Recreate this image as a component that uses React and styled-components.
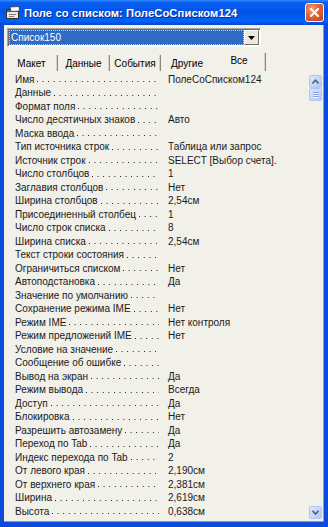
import React from 'react'
import styled, { createGlobalStyle } from 'styled-components'

const GlobalStyle = createGlobalStyle`
  html, body {
    margin: 0;
    padding: 0;
    background: #0A4BDB;
  }
  body {
    font-family: "Liberation Sans", Arial, sans-serif;
  }
`

const Window = styled.div`
  width: 328px;
  height: 527px;
  display: flex;
  flex-direction: column;
  background: #0A4BDB;
  box-sizing: border-box;
  overflow: hidden;
`

const TitleBar = styled.div`
  height: 25px;
  flex: none;
  display: flex;
  align-items: center;
  padding: 0 4px 0 6px;
  background: linear-gradient(to bottom, #2E8BFF 0%, #0B5FF0 10%, #0054E8 45%, #0062F8 85%, #0050E0 94%, #0A44D0 100%);
`

const TitleIcon = styled.svg`
  width: 14px;
  height: 13px;
  flex: none;
  margin-top: -1px;
`

const TitleText = styled.div`
  flex: 1;
  margin-left: 4px;
  color: #fff;
  font-weight: bold;
  font-size: 11.2px;
  letter-spacing: 0.1px;
  text-shadow: 1px 1px 0 #0A2B8C;
  white-space: nowrap;
`

const CloseButton = styled.div`
  width: 19px;
  height: 19px;
  box-sizing: border-box;
  border: 1px solid #fff;
  border-radius: 3px;
  background: radial-gradient(circle at 35% 30%, #F2A07E 0%, #E06238 45%, #C7401C 100%);
  display: flex;
  align-items: center;
  justify-content: center;
  margin-top: -1px;
`

const Client = styled.div`
  flex: 1;
  margin: 0 4px 5px 4px;
  background: #F1F0E9;
  border-right: 1px solid #9D9A8C;
  border-bottom: 1px solid #9D9A8C;
  display: flex;
  flex-direction: column;
  padding-top: 3px;
  min-height: 0;
`

const ComboBox = styled.div`
  width: 254px;
  height: 19px;
  margin-left: 3px;
  box-sizing: border-box;
  border-top: 1px solid #ACA899;
  border-left: 1px solid #ACA899;
  border-right: 1px solid #fff;
  border-bottom: 1px solid #fff;
  box-shadow: inset 1px 1px 0 #716F64;
  background: #fff;
  display: flex;
  padding: 1px;
`

const ComboText = styled.div`
  flex: 1;
  background: #316AC5;
  color: #fff;
  font-size: 10px;
  line-height: 15px;
  padding-left: 2px;
  outline: 1px dotted #E8C86A;
  outline-offset: -1px;
  white-space: nowrap;
`

const ComboButton = styled.div`
  width: 15px;
  flex: none;
  box-sizing: border-box;
  background: #ECE9D8;
  border-top: 1px solid #fff;
  border-left: 1px solid #fff;
  border-right: 1px solid #716F64;
  border-bottom: 1px solid #716F64;
  display: flex;
  align-items: center;
  justify-content: center;
`

const Tabs = styled.div`
  height: 19px;
  margin-top: 5px;
  padding-left: 2px;
  display: flex;
  align-items: flex-end;
  flex: none;
`

const Tab = styled.div`
  width: ${p => p.$w}px;
  height: ${p => (p.$active ? 18 : 16)}px;
  box-sizing: border-box;
  padding-top: ${p => (p.$active ? 2 : 3)}px;
  text-align: center;
  font-size: 10px;
  line-height: 12px;
  color: #000;
  border-right: ${p => (p.$sep ? '1px solid #8A877A' : 'none')};
  box-shadow: ${p => (p.$sep ? 'inset -1px 0 0 #D6D3C6' : 'none')};
  white-space: nowrap;
`

const Panel = styled.div`
  flex: 1;
  display: flex;
  min-height: 0;
`

const List = styled.div`
  flex: 1;
  padding-top: 1.5px;
`

const Row = styled.div`
  height: 13.5px;
  display: flex;
  align-items: center;
  padding-left: 11px;
  font-size: 10px;
  color: #1A1A1A;
  white-space: nowrap;
`

const LabelCell = styled.div`
  width: 144px;
  height: 12px;
  display: flex;
  align-items: center;
  flex: none;
`

const Dots = styled.span`
  flex: 1;
  align-self: flex-end;
  height: 1px;
  margin: 0 0 3px 3px;
  background-image: linear-gradient(to right, #1A1A1A 1px, transparent 1px);
  background-size: 5.6px 1px;
  background-repeat: repeat-x;
`

const Value = styled.div`
  margin-left: 9px;
`

const Scrollbar = styled.div`
  width: 13px;
  flex: none;
  margin-right: 1px;
  padding: 4px 0 2px 0;
  display: flex;
  flex-direction: column;
  justify-content: space-between;
`

const ScrollGroup = styled.div`
  display: flex;
  flex-direction: column;
`

const ScrollBtn = styled.div`
  width: 13px;
  height: 13px;
  box-sizing: border-box;
  background: linear-gradient(135deg, #DCE6FD 0%, #C3D4FB 60%, #B4C8F5 100%);
  border: 1px solid #B2C5F1;
  border-radius: 2px;
  display: flex;
  align-items: center;
  justify-content: center;
`

const Thumb = styled(ScrollBtn)`
  flex-direction: column;
  gap: 1px;
  & > span {
    display: block;
    width: 6px;
    height: 1px;
    background: #8AA3DE;
    box-shadow: 0 1px 0 #EEF3FF;
  }
`

const rows = [
  ['Имя', 'ПолеСоСписком124'],
  ['Данные', ''],
  ['Формат поля', ''],
  ['Число десятичных знаков', 'Авто'],
  ['Маска ввода', ''],
  ['Тип источника строк', 'Таблица или запрос'],
  ['Источник строк', 'SELECT [Выбор счета].'],
  ['Число столбцов', '1'],
  ['Заглавия столбцов', 'Нет'],
  ['Ширина столбцов', '2,54см'],
  ['Присоединенный столбец', '1'],
  ['Число строк списка', '8'],
  ['Ширина списка', '2,54см'],
  ['Текст строки состояния', ''],
  ['Ограничиться списком', 'Нет'],
  ['Автоподстановка', 'Да'],
  ['Значение по умолчанию', ''],
  ['Сохранение режима IME', 'Нет'],
  ['Режим IME', 'Нет контроля'],
  ['Режим предложений IME', 'Нет'],
  ['Условие на значение', ''],
  ['Сообщение об ошибке', ''],
  ['Вывод на экран', 'Да'],
  ['Режим вывода', 'Всегда'],
  ['Доступ', 'Да'],
  ['Блокировка', 'Нет'],
  ['Разрешить автозамену', 'Да'],
  ['Переход по Tab', 'Да'],
  ['Индекс перехода по Tab', '2'],
  ['От левого края', '2,190см'],
  ['От верхнего края', '2,381см'],
  ['Ширина', '2,619см'],
  ['Высота', '0,638см'],
]

const tabs = [
  { name: 'Макет', w: 52, sep: true },
  { name: 'Данные', w: 52, sep: true },
  { name: 'События', w: 51, sep: true },
  { name: 'Другие', w: 52, sep: false },
  { name: 'Все', w: 53, sep: true, active: true },
]

const Chevron = ({ up }) => (
  <svg width="7" height="5" viewBox="0 0 7 5">
    <path
      d={up ? 'M0.5 4.5 L3.5 1.2 L6.5 4.5' : 'M0.5 0.8 L3.5 4 L6.5 0.8'}
      fill="none"
      stroke="#4D6185"
      strokeWidth="1.6"
    />
  </svg>
)

const App = () => {
  return (
    <>
      <GlobalStyle />
      <Window>
        <TitleBar>
          <TitleIcon viewBox="0 0 14 13">
            <rect x="0.5" y="3.5" width="12" height="9" fill="#E8E8E8" stroke="#303030" />
            <rect x="1" y="4" width="11" height="2" fill="#5A5A5A" />
            <path d="M4 1 L13 0.5 L13.5 5 L5 5.5 Z" fill="#FFFFFF" stroke="#404040" strokeWidth="0.8" />
            <rect x="3" y="8" width="7" height="1" fill="#808080" />
            <rect x="3" y="10" width="5" height="1" fill="#808080" />
          </TitleIcon>
          <TitleText>Поле со списком: ПолеСоСписком124</TitleText>
          <CloseButton>
            <svg width="9" height="9" viewBox="0 0 9 9">
              <path d="M1 1 L8 8 M8 1 L1 8" stroke="#fff" strokeWidth="2" strokeLinecap="square" />
            </svg>
          </CloseButton>
        </TitleBar>
        <Client>
          <ComboBox>
            <ComboText>Список150</ComboText>
            <ComboButton>
              <svg width="7" height="4" viewBox="0 0 7 4">
                <path d="M0 0 H7 L3.5 4 Z" fill="#000" />
              </svg>
            </ComboButton>
          </ComboBox>
          <Tabs>
            {tabs.map(t => (
              <Tab key={t.name} $w={t.w} $sep={t.sep} $active={t.active}>
                {t.name}
              </Tab>
            ))}
          </Tabs>
          <Panel>
            <List>
              {rows.map(([label, value]) => (
                <Row key={label}>
                  <LabelCell>
                    {label}
                    <Dots />
                  </LabelCell>
                  <Value>{value}</Value>
                </Row>
              ))}
            </List>
            <Scrollbar>
              <ScrollGroup>
                <ScrollBtn>
                  <Chevron up />
                </ScrollBtn>
                <Thumb>
                  <span />
                  <span />
                  <span />
                </Thumb>
              </ScrollGroup>
              <ScrollBtn>
                <Chevron />
              </ScrollBtn>
            </Scrollbar>
          </Panel>
        </Client>
      </Window>
    </>
  )
}

export default App
